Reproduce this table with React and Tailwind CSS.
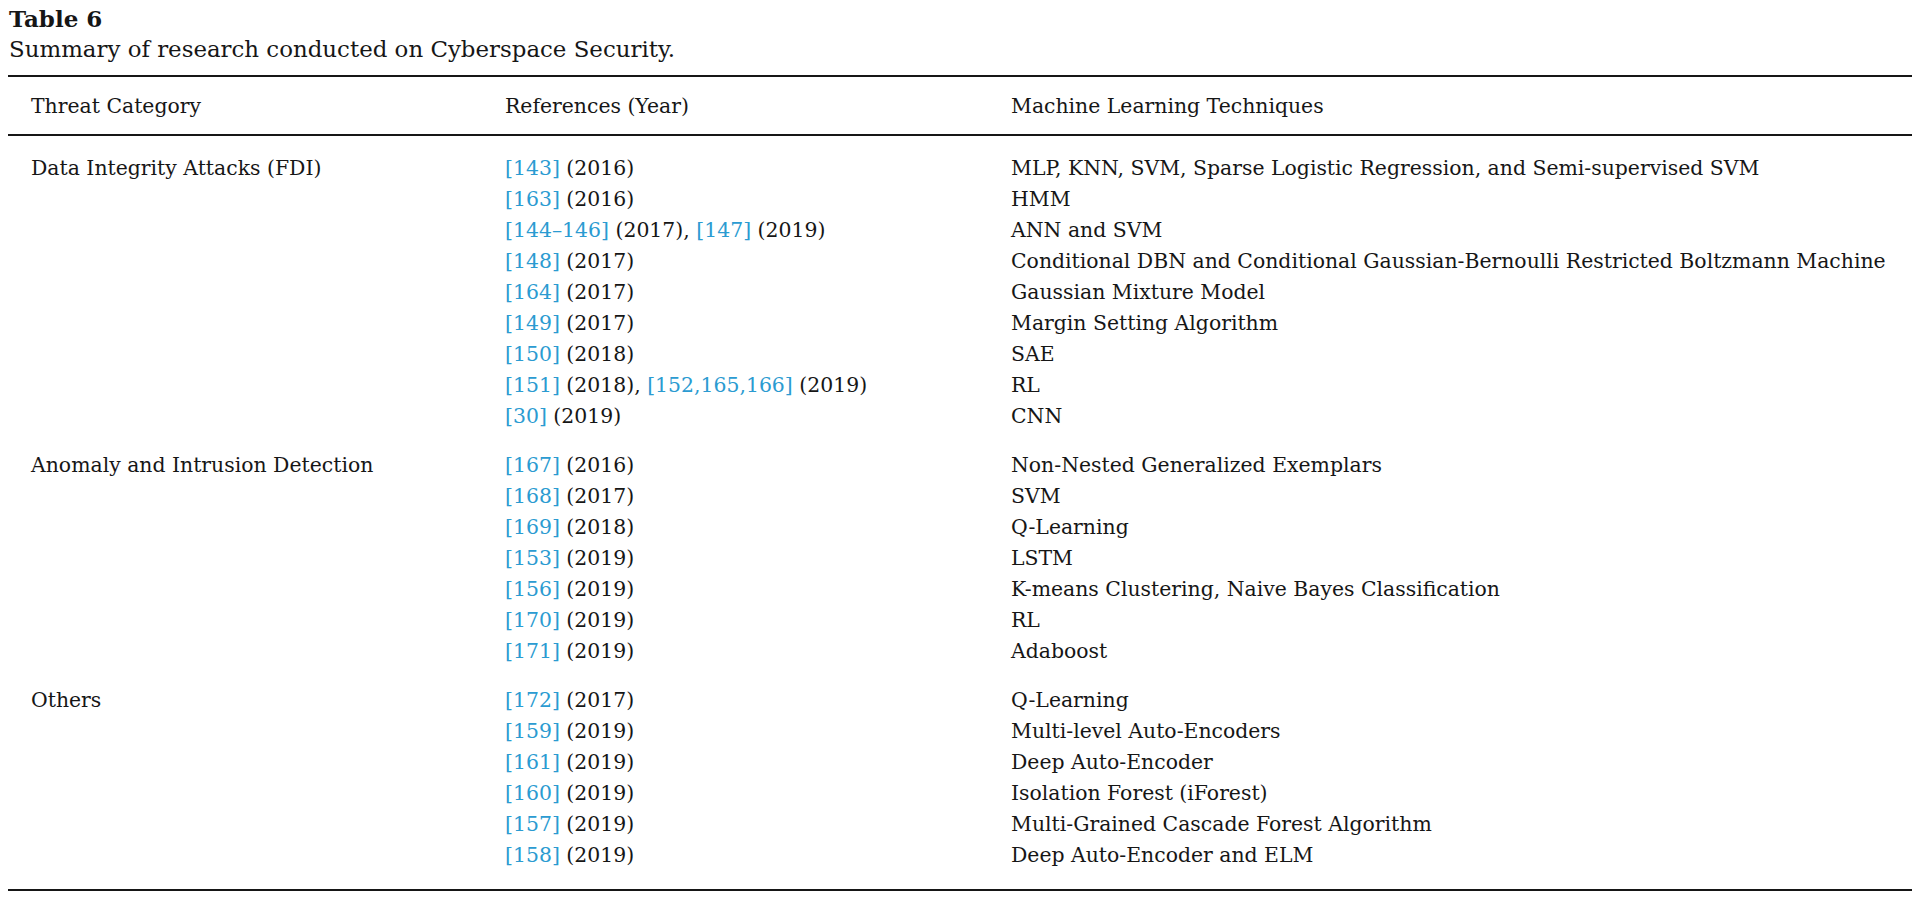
import React from 'react';

const groups = [
    {
        category: "Data Integrity Attacks (FDI)",
        rows: [
            { refs: [["143", "2016"]], tech: "MLP, KNN, SVM, Sparse Logistic Regression, and Semi-supervised SVM" },
            { refs: [["163", "2016"]], tech: "HMM" },
            { refs: [["144–146", "2017"], ["147", "2019"]], tech: "ANN and SVM" },
            { refs: [["148", "2017"]], tech: "Conditional DBN and Conditional Gaussian-Bernoulli Restricted Boltzmann Machine" },
            { refs: [["164", "2017"]], tech: "Gaussian Mixture Model" },
            { refs: [["149", "2017"]], tech: "Margin Setting Algorithm" },
            { refs: [["150", "2018"]], tech: "SAE" },
            { refs: [["151", "2018"], ["152,165,166", "2019"]], tech: "RL" },
            { refs: [["30", "2019"]], tech: "CNN" }
        ]
    },
    {
        category: "Anomaly and Intrusion Detection",
        rows: [
            { refs: [["167", "2016"]], tech: "Non-Nested Generalized Exemplars" },
            { refs: [["168", "2017"]], tech: "SVM" },
            { refs: [["169", "2018"]], tech: "Q-Learning" },
            { refs: [["153", "2019"]], tech: "LSTM" },
            { refs: [["156", "2019"]], tech: "K-means Clustering, Naive Bayes Classification" },
            { refs: [["170", "2019"]], tech: "RL" },
            { refs: [["171", "2019"]], tech: "Adaboost" }
        ]
    },
    {
        category: "Others",
        rows: [
            { refs: [["172", "2017"]], tech: "Q-Learning" },
            { refs: [["159", "2019"]], tech: "Multi-level Auto-Encoders" },
            { refs: [["161", "2019"]], tech: "Deep Auto-Encoder" },
            { refs: [["160", "2019"]], tech: "Isolation Forest (iForest)" },
            { refs: [["157", "2019"]], tech: "Multi-Grained Cascade Forest Algorithm" },
            { refs: [["158", "2019"]], tech: "Deep Auto-Encoder and ELM" }
        ]
    }
];

function Refs({ refs }) {
    return (
        <span>
            {refs.map(([num, year], i) => (
                <span key={i}>
                    {i > 0 && ", "}
                    <span className="text-[#2b9bd1]">[{num}]</span> ({year})
                </span>
            ))}
        </span>
    );
}

export default function App() {
    return (
        <div className="min-h-screen bg-white text-[#161616] font-['DejaVu_Serif',serif]">
            <div className="pl-[9px] pt-[4px]">
                <div className="text-[23px] font-bold leading-[30px]">Table 6</div>
                <div className="text-[22.9px] leading-[30px]">Summary of research conducted on Cyberspace Security.</div>
            </div>

            <div className="mx-[8px] mt-[11px] border-t-[2px] border-b-[2px] border-[#161616]">
                {/* Header */}
                <div className="grid grid-cols-[474px_506px_1fr] pl-[23px] pt-[14px] pb-[12px] border-b-[2px] border-[#161616] text-[20.4px] leading-[31px]">
                    <div>Threat Category</div>
                    <div>References (Year)</div>
                    <div>Machine Learning Techniques</div>
                </div>

                {/* Body */}
                <div className="flex flex-col gap-[18px] pt-[17px] pb-[18px] text-[20.4px] leading-[31px]">
                    {groups.map((g, gi) => (
                        <div key={gi} className="grid grid-cols-[474px_506px_1fr] pl-[23px]">
                            <div>{g.category}</div>
                            <div>
                                {g.rows.map((r, ri) => (
                                    <div key={ri}><Refs refs={r.refs} /></div>
                                ))}
                            </div>
                            <div>
                                {g.rows.map((r, ri) => (
                                    <div key={ri}>{r.tech}</div>
                                ))}
                            </div>
                        </div>
                    ))}
                </div>
            </div>
        </div>
    );
}
